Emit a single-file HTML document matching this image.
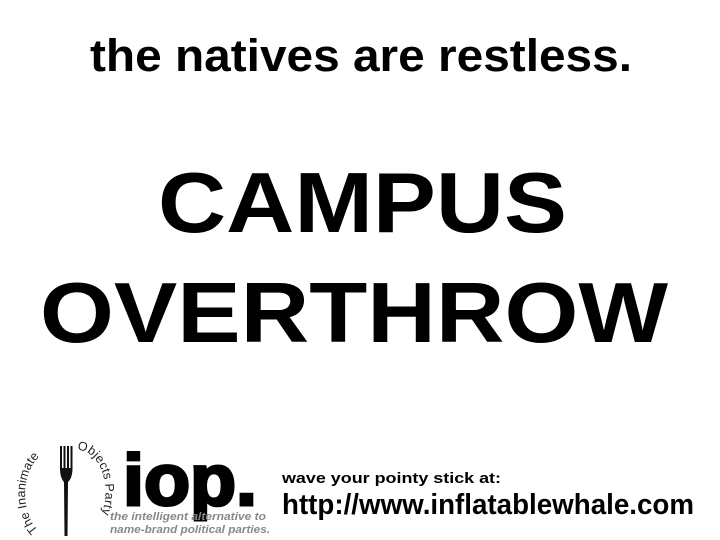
<!DOCTYPE html>
<html><head><meta charset="utf-8"><style>
html,body{margin:0;padding:0;background:#fff;width:720px;height:540px;overflow:hidden}
svg{display:block}
</style></head><body>
<svg width="720" height="540" viewBox="0 0 720 540" xmlns="http://www.w3.org/2000/svg" font-family="Liberation Sans, Arial, sans-serif">
<rect width="720" height="540" fill="#fff"/>
<text x="90" y="71" font-size="45" font-weight="bold" textLength="542" lengthAdjust="spacingAndGlyphs">the natives are restless.</text>
<text x="158" y="232" font-size="85" font-weight="bold" textLength="409" lengthAdjust="spacingAndGlyphs">CAMPUS</text>
<text x="40" y="342" font-size="85" font-weight="bold" textLength="628" lengthAdjust="spacingAndGlyphs">OVERTHROW</text>
<defs>
<path id="la" d="M38,530 A30,44 0 0 1 57,450"/>
<path id="ra" d="M77,450 A28,42 0 0 1 94,526"/>
</defs>
<text font-size="12.5" fill="#222"><textPath href="#la" textLength="80" lengthAdjust="spacing">The Inanimate</textPath></text>
<text font-size="12.5" fill="#222"><textPath href="#ra" textLength="78" lengthAdjust="spacing">Objects Party</textPath></text>
<g fill="#111">
<rect x="60" y="446" width="2" height="24"/>
<rect x="63.5" y="446" width="2" height="24"/>
<rect x="67" y="446" width="2" height="24"/>
<rect x="70.5" y="446" width="2" height="24"/>
<path d="M60,468 L72.5,468 Q72.5,478 68,482 L67.5,536 L64.5,536 L64,482 Q60,478 60,468Z"/>
</g>
<text x="123" y="505" font-size="72" font-weight="bold" stroke="#000" stroke-width="3" textLength="134" lengthAdjust="spacingAndGlyphs">iop.</text>
<text x="110" y="520" font-size="11" font-weight="bold" font-style="italic" fill="#888" textLength="156" lengthAdjust="spacingAndGlyphs">the intelligent alternative to</text>
<text x="110" y="533" font-size="11" font-weight="bold" font-style="italic" fill="#888" textLength="160" lengthAdjust="spacingAndGlyphs">name-brand political parties.</text>
<text x="282" y="483" font-size="15" font-weight="bold" textLength="219" lengthAdjust="spacingAndGlyphs">wave your pointy stick at:</text>
<text x="282" y="514" font-size="29" font-weight="bold" textLength="412" lengthAdjust="spacingAndGlyphs">http://www.inflatablewhale.com</text>
</svg>
</body></html>
